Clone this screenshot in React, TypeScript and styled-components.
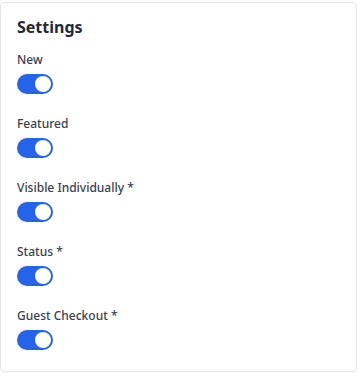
import React, { useState } from 'react';
import styled, { createGlobalStyle } from 'styled-components';

const GlobalStyle = createGlobalStyle`
  html, body {
    margin: 0;
    padding: 0;
    background: #ffffff;
    font-family: "Noto Sans", "Open Sans", sans-serif;
  }
`;

const Page = styled.div`
  padding-top: 2px;
  width: 358px;
`;

const Card = styled.section`
  width: 357px;
  box-sizing: border-box;
  border: 1px solid #e5e7eb;
  border-radius: 4px;
  padding: 12px 16px 21px;
  background: #fff;
`;

const Title = styled.h2`
  margin: 0 0 12px;
  font-size: 16px;
  line-height: 24px;
  font-weight: 700;
  color: #1f2937;
`;

const FieldList = styled.div`
  display: flex;
  flex-direction: column;
  gap: 21px;
`;

const Field = styled.div`
  display: flex;
  flex-direction: column;
  align-items: flex-start;
  gap: 6px;
`;

const Label = styled.label`
  padding-top: 1px;
  font-size: 12px;
  line-height: 16px;
  font-weight: 500;
  color: #374151;
`;

const Track = styled.button<{ $on: boolean }>`
  position: relative;
  width: 36px;
  height: 20px;
  padding: 0;
  border: none;
  border-radius: 10px;
  background: ${({ $on }) => ($on ? '#2563eb' : '#d1d5db')};
  cursor: pointer;
`;

const Knob = styled.span<{ $on: boolean }>`
  position: absolute;
  top: 2px;
  left: ${({ $on }) => ($on ? '18px' : '2px')};
  width: 16px;
  height: 16px;
  border-radius: 50%;
  background: #fff;
`;

const fields = ['New', 'Featured', 'Visible Individually *', 'Status *', 'Guest Checkout *'];

const Toggle: React.FC<{ on: boolean; onChange: () => void }> = ({ on, onChange }) => (
  <Track type="button" $on={on} onClick={onChange}>
    <Knob $on={on} />
  </Track>
);

export default function App() {
  const [values, setValues] = useState<boolean[]>(fields.map(() => true));

  return (
    <Page>
      <GlobalStyle />
      <Card>
        <Title>Settings</Title>
        <FieldList>
          {fields.map((name, i) => (
            <Field key={name}>
              <Label>{name}</Label>
              <Toggle
                on={values[i]}
                onChange={() => setValues(v => v.map((x, j) => (j === i ? !x : x)))}
              />
            </Field>
          ))}
        </FieldList>
      </Card>
    </Page>
  );
}
